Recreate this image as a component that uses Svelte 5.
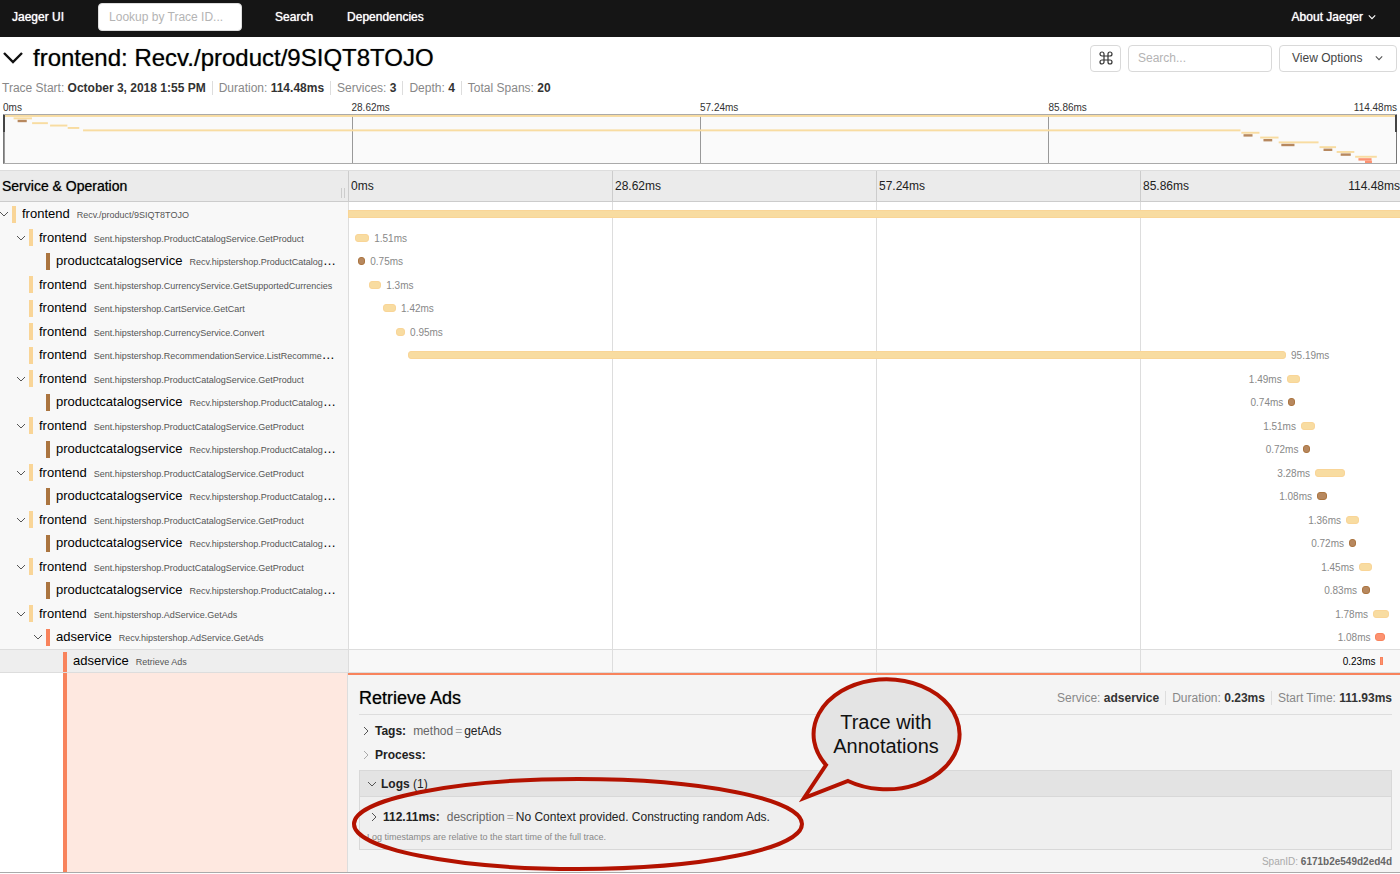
<script lang="ts">
  type Span = {
    level: number;
    service: string;
    op: string;
    start: number;
    duration: number;
    parent?: boolean;
    labelLeft?: boolean;
  };

  const total = 114.48;
  const ticks = ["0ms", "28.62ms", "57.24ms", "85.86ms"];
  const colors: Record<string, string> = {
    frontend: "#f8dca1",
    productcatalogservice: "#b7885e",
    adservice: "#fc9271",
  };
  const edges: Record<string, string> = {
    frontend: "#f9d597",
    productcatalogservice: "#ab7540",
    adservice: "#f8835c",
  };

  const getProduct = "Sent.hipstershop.ProductCatalogService.GetProduct";
  const recvProduct = "Recv.hipstershop.ProductCatalogService.GetProduct";

  // a frontend call to the catalog and the span that answers it
  function catalogPair(a: number, da: number, b: number, db: number, labelLeft = true): Span[] {
    return [
      { level: 1, service: "frontend", op: getProduct, start: a, duration: da, parent: true, labelLeft },
      { level: 2, service: "productcatalogservice", op: recvProduct, start: b, duration: db, labelLeft },
    ];
  }

  const spans: Span[] = [
    { level: 0, service: "frontend", op: "Recv./product/9SIQT8TOJO", start: 0, duration: total, parent: true },
    ...catalogPair(0.79, 1.51, 1.12, 0.75, false),
    { level: 1, service: "frontend", op: "Sent.hipstershop.CurrencyService.GetSupportedCurrencies", start: 2.31, duration: 1.3 },
    { level: 1, service: "frontend", op: "Sent.hipstershop.CartService.GetCart", start: 3.79, duration: 1.42 },
    { level: 1, service: "frontend", op: "Sent.hipstershop.CurrencyService.Convert", start: 5.24, duration: 0.95 },
    { level: 1, service: "frontend", op: "Sent.hipstershop.RecommendationService.ListRecommendations", start: 6.5, duration: 95.19 },
    ...catalogPair(101.76, 1.49, 101.94, 0.74),
    ...catalogPair(103.31, 1.51, 103.58, 0.72),
    ...catalogPair(104.83, 3.28, 105.05, 1.08),
    ...catalogPair(108.19, 1.36, 108.52, 0.72),
    ...catalogPair(109.6, 1.45, 109.93, 0.83),
    { level: 1, service: "frontend", op: "Sent.hipstershop.AdService.GetAds", start: 111.12, duration: 1.78, parent: true, labelLeft: true },
    { level: 2, service: "adservice", op: "Recv.hipstershop.AdService.GetAds", start: 111.39, duration: 1.08, parent: true, labelLeft: true },
    { level: 3, service: "adservice", op: "Retrieve Ads", start: 111.93, duration: 0.23, labelLeft: true },
  ];
  const selected = spans.length - 1;

  const pct = (ms: number) => (ms / total) * 100;
</script>

{#snippet chevron(cls: string)}
  <svg class="chevron {cls}" viewBox="0 0 10 10" aria-hidden="true">
    <path d="M1 3l4 4 4-4" />
  </svg>
{/snippet}

{#snippet tickCells()}
  {#each ticks as tick, i}
    <div class="tick">
      <span>{tick}</span>
      {#if i === ticks.length - 1}<span>{total}ms</span>{/if}
    </div>
  {/each}
{/snippet}

<nav class="nav">
  <a class="brand" href="#home">Jaeger UI</a>
  <input type="text" placeholder="Lookup by Trace ID..." aria-label="Lookup by Trace ID" />
  <a href="#search">Search</a>
  <a href="#dependencies">Dependencies</a>
  <button class="about" type="button">About Jaeger {@render chevron("small")}</button>
</nav>

<header class="title-row">
  <button class="collapse" type="button" aria-label="Collapse header">
    <svg viewBox="0 0 22 14" aria-hidden="true"><path d="M2 2l9 9 9-9" /></svg>
  </button>
  <h1>frontend: Recv./product/9SIQT8TOJO</h1>
  <button class="box keys" type="button" aria-label="Keyboard shortcuts">
    <svg viewBox="0 0 14 14" aria-hidden="true">
      <path
        d="M5 5V3a2 2 0 1 0-2 2h8a2 2 0 1 0-2-2v8a2 2 0 1 0 2-2H3a2 2 0 1 0 2 2z"
      />
    </svg>
  </button>
  <input class="box search" type="text" placeholder="Search..." aria-label="Search spans" />
  <button class="box options" type="button">View Options {@render chevron("small")}</button>
</header>

<ul class="facts summary">
  <li>Trace Start: <b>October 3, 2018 1:55 PM</b></li>
  <li>Duration: <b>114.48ms</b></li>
  <li>Services: <b>3</b></li>
  <li>Depth: <b>4</b></li>
  <li>Total Spans: <b>20</b></li>
</ul>

<section class="minimap">
  <div class="mini-ticks">{@render tickCells()}</div>
  <div class="mini-graph">
    <svg viewBox="0 0 100 100" preserveAspectRatio="none" aria-hidden="true">
      {#each spans as span, i}
        <rect
          x={pct(span.start)}
          y={i * 5}
          width={Math.max(pct(span.duration), 0.5)}
          height={span.service === "frontend" ? 4 : 5}
          fill={colors[span.service]}
        />
      {/each}
    </svg>
  </div>
</section>

<main class="viewer">
  <div class="head">
    <h2>Service &amp; Operation</h2>
    <div class="head-ticks">{@render tickCells()}</div>
  </div>

  {#each spans as span, i}
    <div class="row" class:selected={i === selected}>
      <div class="name-col" style="padding-left: {span.level * 17}px">
        {#if span.parent}
          <button class="toggle" type="button" aria-label="Toggle children">
            {@render chevron("")}
          </button>
        {:else}
          <span class="toggle"></span>
        {/if}
        <span class="stripe" style="background: {edges[span.service]}"></span>
        <span class="name">{span.service}<small>{span.op}</small></span>
      </div>
      <div class="track">
        <div
          class="bar"
          class:square={i === 0 || i === selected}
          style="margin-left: {pct(span.start)}%; width: {pct(span.duration)}%; background: {colors[span.service]}; border-color: {edges[span.service]}"
        >
          {#if i > 0}
            <span class="label" class:left={span.labelLeft}>{span.duration}ms</span>
          {/if}
        </div>
      </div>
    </div>
  {/each}

  <div class="detail-row">
    <div class="detail-side"><div class="detail-fill"></div></div>
    <section class="detail">
      <div class="detail-head">
        <h2>Retrieve Ads</h2>
        <ul class="facts">
          <li>Service: <b>adservice</b></li>
          <li>Duration: <b>0.23ms</b></li>
          <li>Start Time: <b>111.93ms</b></li>
        </ul>
      </div>
      <button class="item" type="button">
        {@render chevron("right")}<b>Tags:</b>
        <span class="kv"><i>method</i><em>=</em>getAds</span>
      </button>
      <button class="item" type="button">{@render chevron("right faint")}<b>Process:</b></button>
      <div class="logs">
        <button class="logs-head" type="button">
          {@render chevron("")}<span><b>Logs</b> (1)</span>
        </button>
        <div class="logs-body">
          <button class="item" type="button">
            {@render chevron("right")}<b>112.11ms:</b>
            <span class="kv"><i>description</i><em>=</em>No Context provided. Constructing random Ads.</span>
          </button>
          <p>Log timestamps are relative to the start time of the full trace.</p>
        </div>
      </div>
      <p class="span-id">SpanID: <b>6171b2e549d2ed4d</b></p>

      <svg class="notes" viewBox="0 0 620 200">
        <ellipse cx="230" cy="149" rx="224" ry="45" />
        <path class="bubble" d="M478 90A73 55 0 1 1 500 106L456 123Z" />
        <text x="538" y="54">Trace with</text>
        <text x="538" y="78">Annotations</text>
      </svg>
    </section>
  </div>
</main>

<style>
  :global(body) {
    background: #fff;
    color: #222;
    font-family: "Liberation Sans", Arial, sans-serif;
    font-size: 12px;
  }
  h1,
  h2,
  p,
  ul {
    margin: 0;
    padding: 0;
  }
  h1,
  h2 {
    color: #000;
    font-weight: 400;
    text-shadow: 0 0 1px #0008;
  }
  button,
  input {
    box-sizing: border-box;
    font: inherit;
    color: inherit;
  }
  button {
    background: none;
    border: 0;
    padding: 0;
    text-align: left;
  }
  input::placeholder {
    color: #b4b4b4;
    opacity: 1;
  }
  .chevron {
    width: 10px;
    height: 10px;
    flex: none;
    fill: none;
    stroke: #555;
    stroke-width: 1;
  }
  .chevron.small {
    width: 8px;
    height: 8px;
    stroke-width: 1.4;
  }
  .chevron.right {
    transform: rotate(-90deg);
  }
  .chevron.faint {
    stroke: #aaa;
  }

  .nav {
    display: flex;
    align-items: center;
    height: 37px;
    padding: 0 24px 4px 12px;
    box-sizing: border-box;
    background: #151515;
    color: #fff;
  }
  .nav a,
  .about {
    color: #fff;
    text-decoration: none;
    text-shadow: 0 0 1px #fff;
  }
  .nav a {
    margin-right: 34px;
  }
  .nav input {
    width: 144px;
    height: 28px;
    margin-right: 33px;
    padding: 0 10px;
    border: 1px solid #ddd;
    border-radius: 4px;
    background: #fff;
    color: #222;
  }
  .about {
    display: flex;
    align-items: center;
    gap: 5px;
    margin-left: auto;
  }
  .about :global(.chevron) {
    stroke: #fff;
  }

  .title-row {
    display: flex;
    align-items: center;
    height: 42px;
    padding: 0 3px 0 2px;
  }
  .collapse {
    display: flex;
    width: 31px;
  }
  .collapse svg {
    width: 22px;
    height: 14px;
    fill: none;
    stroke: #111;
    stroke-width: 2.4;
  }
  h1 {
    flex: 1;
    font-size: 24px;
    line-height: 32px;
  }
  .box {
    height: 27px;
    margin-left: 7px;
    border: 1px solid #d9d9d9;
    border-radius: 4px;
    background: #fff;
  }
  .keys {
    display: flex;
    align-items: center;
    justify-content: center;
    width: 31px;
  }
  .keys svg {
    width: 14px;
    height: 14px;
    fill: none;
    stroke: #333;
    stroke-width: 1.2;
  }
  .search {
    width: 144px;
    padding: 0 9px;
  }
  .options {
    display: flex;
    align-items: center;
    justify-content: space-between;
    width: 118px;
    padding: 0 13px 0 12px;
    color: #444;
  }

  .facts {
    display: flex;
    list-style: none;
    color: #888;
    line-height: 14px;
  }
  .facts li + li {
    margin-left: 6px;
    padding-left: 6px;
    border-left: 1px solid #ddd;
  }
  .facts b {
    color: #333;
  }
  .summary {
    padding: 2px 2px 0;
  }

  .minimap {
    padding: 6px 3px;
  }
  .mini-ticks,
  .head-ticks {
    display: grid;
    grid-template-columns: repeat(4, 1fr);
  }
  .tick {
    display: flex;
    justify-content: space-between;
  }
  .mini-ticks {
    height: 13px;
    font-size: 10px;
    line-height: 13px;
    color: #333;
  }
  .mini-graph {
    position: relative;
    height: 50px;
    box-sizing: border-box;
    border: 1px solid #aaa;
    border-left-color: #777;
    border-right-color: #777;
    background: repeating-linear-gradient(to right, #999 0 1px, #fafafa 1px 25%);
  }
  .mini-graph svg {
    display: block;
    width: 100%;
    height: 48px;
  }
  /* grips of the selected time range */
  .mini-graph::before,
  .mini-graph::after {
    content: "";
    position: absolute;
    top: 0;
    left: -1px;
    width: 2px;
    height: 17px;
    background: #444;
  }
  .mini-graph::after {
    left: auto;
    right: -1px;
  }

  .head,
  .row,
  .detail-row {
    display: grid;
    grid-template-columns: 348px 1fr;
  }
  .viewer {
    overflow: hidden;
    border-bottom: 1px solid #aaa;
  }
  .head {
    height: 32px;
    box-sizing: border-box;
    border-top: 1px solid #ddd;
    border-bottom: 1px solid #ccc;
    background: #ebebeb;
    line-height: 30px;
  }
  .head h2 {
    display: flex;
    justify-content: space-between;
    padding: 0 3px 0 2px;
    font-size: 14px;
  }
  .head h2::after {
    content: "";
    align-self: flex-end;
    width: 4px;
    height: 10px;
    margin-bottom: 3px;
    border: 1px solid #ccc;
    border-width: 0 1px;
    box-sizing: border-box;
  }
  .head-ticks {
    margin-right: -4px;
    background: repeating-linear-gradient(to right, #ccc 0 1px, transparent 1px 25%);
  }
  .head-ticks .tick {
    padding: 0 4px 0 3px;
  }

  .row {
    height: 23px;
  }
  .row:nth-child(even),
  .row.selected {
    height: 24px;
  }
  .name-col {
    display: flex;
    align-items: center;
    min-width: 0;
    background: #f8f8f8;
  }
  .toggle {
    display: flex;
    justify-content: center;
    flex: none;
    width: 7px;
    margin-right: 5px;
  }
  .stripe {
    flex: none;
    width: 4px;
    height: 17px;
    margin-right: 6px;
  }
  .name {
    flex: 1;
    overflow: hidden;
    margin-right: 10px;
    padding-top: 1px;
    color: #000;
    font-size: 13px;
    line-height: 20px;
    text-overflow: ellipsis;
    white-space: nowrap;
  }
  .name small {
    margin-left: 7px;
    color: #555;
    font-size: 9px;
  }
  .track {
    display: flex;
    align-items: center;
    margin-right: -4px;
    background: repeating-linear-gradient(to right, #ddd 0 1px, transparent 1px 25%);
  }
  .bar {
    position: relative;
    height: 8px;
    box-sizing: border-box;
    border: 1px solid;
    border-radius: 3px;
  }
  .bar.square {
    border-radius: 0;
  }
  .label {
    position: absolute;
    left: 100%;
    top: -3px;
    padding: 0 6px;
    color: #888;
    font-size: 10px;
    line-height: 13px;
  }
  .label.left {
    left: auto;
    right: 100%;
  }
  .selected .name-col {
    border: 1px solid #ddd;
    border-width: 1px 0;
    background: #eee;
  }
  .selected .stripe {
    align-self: flex-end;
    height: 20px;
  }
  .selected .track {
    background-color: #f8f8f8;
    border: 1px solid #ddd;
    border-width: 1px 0;
  }
  .selected .label {
    color: #000;
  }

  .detail-side {
    display: flex;
    padding-left: 63px;
  }
  .detail-fill {
    flex: 1;
    border-left: 4px solid #f8835c;
    border-right: 1px solid #ddd;
    background: #fee8e0;
  }
  .detail {
    position: relative;
    padding: 9px 8px 3px 11px;
    border-top: 2px solid #f8835c;
    background: #f4f4f4;
  }
  .detail-head {
    display: flex;
    align-items: center;
    justify-content: space-between;
    padding-bottom: 2px;
    margin-bottom: 4px;
    border-bottom: 1px solid #ddd;
  }
  .detail-head h2 {
    font-size: 18px;
    line-height: 28px;
  }
  .item {
    display: flex;
    align-items: center;
    height: 24px;
    padding-left: 2px;
  }
  .item b {
    margin: 0 7px 0 4px;
  }
  .kv i {
    color: #666;
    font-style: normal;
  }
  .kv em {
    padding: 0 2px;
    color: #aaa;
    font-style: normal;
  }
  .logs {
    margin-top: 3px;
    border: 1px solid #d8d8d8;
  }
  .logs-head {
    display: flex;
    align-items: center;
    gap: 4px;
    width: 100%;
    height: 26px;
    padding-left: 7px;
    border-bottom: 1px solid #d8d8d8;
    background: #e3e3e3;
  }
  .logs-body {
    padding: 8px 7px 4px;
    background: #efefef;
  }
  .logs-body p {
    color: #888;
    font-size: 9px;
    line-height: 16px;
  }
  .span-id {
    margin-top: 5px;
    color: #aaa;
    font-size: 10px;
    line-height: 14px;
    text-align: right;
  }
  .span-id b {
    color: #666;
  }
  .notes {
    position: absolute;
    top: 0;
    left: 0;
    width: 620px;
    height: 200px;
    overflow: visible;
    fill: none;
    stroke: #b31200;
    stroke-width: 4;
    pointer-events: none;
  }
  .bubble {
    fill: #e4e4e4;
  }
  .notes text {
    fill: #111;
    stroke: none;
    font-size: 20px;
    text-anchor: middle;
  }
</style>
